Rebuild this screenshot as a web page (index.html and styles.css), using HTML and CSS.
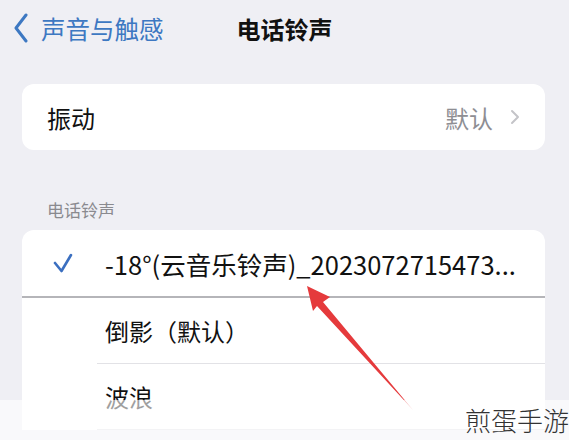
FILE: index.html
```html
<!DOCTYPE html>
<html lang="zh-CN">
<head>
    <meta charset="UTF-8">
    <meta name="viewport" content="width=device-width, initial-scale=1.0">
    <title>电话铃声</title>
    <link rel="stylesheet" href="styles.css">
</head>
<body>
    <div class="page">
        <div class="nav">
            <div class="back">
                <svg class="back-icon" width="16" height="30" viewBox="0 0 16 30">
                    <path d="M13 2 L3 15 L13 28" fill="none" stroke="#3d78c2" stroke-width="3" stroke-linecap="round" stroke-linejoin="round"/>
                </svg>
                <span>声音与触感</span>
            </div>
            <div class="title">电话铃声</div>
            <div></div>
        </div>

        <div class="card">
            <div class="row">
                <span class="label">振动</span>
                <span class="value">默认</span>
                <svg class="chevron" width="10" height="16" viewBox="0 0 10 16">
                    <path d="M2 2 L8 8 L2 14" fill="none" stroke="#c4c4c8" stroke-width="2" stroke-linecap="round" stroke-linejoin="round"/>
                </svg>
            </div>
        </div>

        <p class="section-title">电话铃声</p>

        <div class="card tones">
            <div class="tone current">
                <div class="mark">
                    <svg width="20" height="20" viewBox="0 0 20 20">
                        <path d="M2 10 L8.5 18 L18 2" fill="none" stroke="#3b6fc0" stroke-width="2.6" stroke-linecap="round" stroke-linejoin="round"/>
                    </svg>
                </div>
                <div class="tone-name">-18°(云音乐铃声)_2023072715473...</div>
            </div>
            <div class="tone">
                <div class="mark"></div>
                <div class="tone-name">倒影（默认）</div>
            </div>
            <div class="tone">
                <div class="mark"></div>
                <div class="tone-name">波浪</div>
            </div>
        </div>

        <!-- 红色箭头标注 -->
        <svg class="arrow" width="569" height="440" viewBox="0 0 569 440">
            <polygon points="307,286 330,297 323,302 413,410 317,306 313,311" fill="#e53a3c"/>
        </svg>

        <div class="watermark">煎蛋手游</div>
    </div>
</body>
</html>
```

FILE: styles.css
```css
body {
    margin: 0;
    font-family: "Noto Sans CJK SC", "Noto Sans", sans-serif;
    background-color: #efeff4;
    color: #111;
}
.page {
    position: relative;
    width: 569px;
    height: 440px;
    overflow: hidden;
}
.nav {
    display: grid;
    grid-template-columns: 1fr auto 1fr;
    align-items: center;
    height: 56px;
    padding: 0 13px;
}
.back {
    display: flex;
    align-items: center;
    gap: 12px;
    color: #3d78c2;
    font-size: 24.5px;
}
.back-icon {
    flex: none;
}
.title {
    font-size: 24px;
    font-weight: bold;
}
.card {
    margin: 28px 24px 0 22px;
    background: #ffffff;
    border-radius: 12px;
}
.row {
    display: flex;
    align-items: center;
    height: 66px;
    padding: 0 25px 0 25px;
}
.label {
    flex-grow: 1;
    font-size: 24px;
}
.value {
    font-size: 24px;
    color: #8e8e93;
    margin-right: 17px;
}
.section-title {
    margin: 48px 0 8px 47px;
    font-size: 17px;
    line-height: 24px;
    color: #8a8a8f;
}
.tones {
    margin-top: 0;
    border-radius: 12px 12px 0 0;
}
.tone {
    display: flex;
    align-items: stretch;
}
.tone.current {
    height: 66px;
    border-bottom: 2px solid #b5b5b9;
}
.mark {
    flex: none;
    width: 75px;
    padding-left: 31px;
    box-sizing: border-box;
    display: flex;
    align-items: center;
}
.tone-name {
    flex-grow: 1;
    display: flex;
    align-items: center;
    height: 65px;
    padding-left: 8px;
    font-size: 24px;
    white-space: nowrap;
    border-bottom: 1px solid #e2e2e6;
}
.tone.current .tone-name {
    height: 66px;
    font-size: 25.5px;
    border-bottom: none;
}
.arrow {
    position: absolute;
    left: 0;
    top: 0;
}
.watermark {
    position: absolute;
    left: 0;
    right: 0;
    bottom: 0;
    height: 40px;
    background: rgba(255, 255, 255, 0.6);
    text-align: right;
    font-size: 26px;
    line-height: 40px;
    font-weight: 300;
    color: #333;
}
```
